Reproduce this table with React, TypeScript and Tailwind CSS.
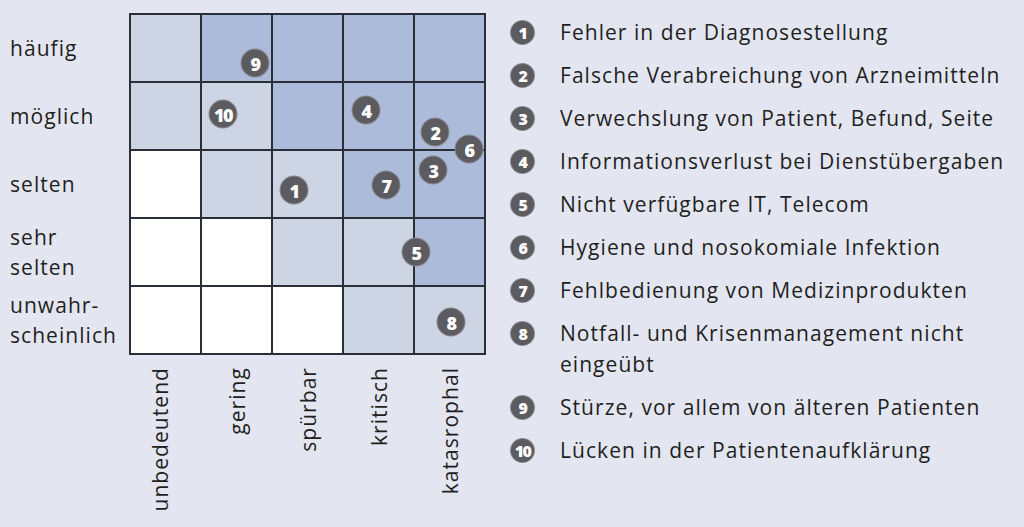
const rowLabels = [["häufig"], ["möglich"], ["selten"], ["sehr", "selten"], ["unwahr-", "scheinlich"]];

const colLabels = ["unbedeutend", "gering", "spürbar", "kritisch", "katasrophal"];

// 0 = white, 1 = light, 2 = dark
const cells = [
  [1, 2, 2, 2, 2],
  [1, 1, 2, 2, 2],
  [0, 1, 1, 2, 2],
  [0, 0, 1, 1, 2],
  [0, 0, 0, 1, 1],
];

const cellColor = ["bg-white", "bg-[#cdd5e5]", "bg-[#acbbd9]"];

const markers = [
  { n: 9, x: 126, y: 50 },
  { n: 10, x: 94, y: 101 },
  { n: 4, x: 237, y: 97 },
  { n: 2, x: 306, y: 119 },
  { n: 6, x: 340, y: 136 },
  { n: 3, x: 304, y: 157 },
  { n: 7, x: 257, y: 172 },
  { n: 1, x: 165, y: 177 },
  { n: 5, x: 287, y: 239 },
  { n: 8, x: 322, y: 309 },
];

const legend = [
  ["Fehler in der Diagnosestellung"],
  ["Falsche Verabreichung von Arzneimitteln"],
  ["Verwechslung von Patient, Befund, Seite"],
  ["Informationsverlust bei Dienstübergaben"],
  ["Nicht verfügbare IT, Telecom"],
  ["Hygiene und nosokomiale Infektion"],
  ["Fehlbedienung von Medizinprodukten"],
  ["Notfall- und Krisenmanagement nicht", "eingeübt"],
  ["Stürze, vor allem von älteren Patienten"],
  ["Lücken in der Patientenaufklärung"],
];

const Badge = ({ n, size }: { n: number; size: "sm" | "lg" }) => (
  <div
    className={
      size === "lg"
        ? "w-[27px] h-[27px] rounded-full bg-[#5b5b60] ring-1 ring-[#8a8a90] flex items-center justify-center text-white font-extrabold text-[18px] leading-none tracking-[-0.08em]"
        : "w-[23px] h-[23px] rounded-full bg-[#5b5b60] ring-1 ring-[#8a8a90] flex items-center justify-center text-white font-extrabold text-[16px] leading-none tracking-[-0.1em]"
    }
  >
    {n}
  </div>
);

export default function App() {
  return (
    <div className="w-[1024px] h-[527px] bg-[#e3e6f0] flex text-[#1f1f22] font-['Open_Sans',sans-serif] font-medium overflow-hidden">
      <div className="w-[500px] pt-[13px] flex flex-col">
        <div className="flex">
          <div className="w-[129px] grid grid-rows-[repeat(5,66px)] gap-[2px] pt-[2px]">
            {rowLabels.map((lines, i) => (
              <div key={i} className="flex flex-col justify-center pl-[10px] text-[21px] leading-[30px] tracking-[0.05em]">
                {lines.map((l) => (
                  <span key={l}>{l}</span>
                ))}
              </div>
            ))}
          </div>
          <div className="relative">
            <div className="grid grid-cols-[repeat(5,69px)] grid-rows-[repeat(5,66px)] gap-[2px] p-[2px] bg-[#2a2e36]">
              {cells.flat().map((c, i) => (
                <div key={i} className={cellColor[c]} />
              ))}
            </div>
            {markers.map((m) => (
              <div
                key={m.n}
                className="absolute -translate-x-1/2 -translate-y-1/2"
                style={{ left: m.x, top: m.y }}
              >
                <Badge n={m.n} size="lg" />
              </div>
            ))}
          </div>
        </div>
        <div className="ml-[129px] mt-[12px] grid grid-cols-[repeat(5,69px)] gap-[2px] px-[2px]">
          {colLabels.map((l, i) => (
            <div key={l} className={i === 0 ? "flex justify-center items-start pr-[12px]" : "flex justify-center items-start"}>
              <span className="[writing-mode:vertical-rl] rotate-180 text-[21px] leading-[24px] tracking-[0.05em]">
                {l}
              </span>
            </div>
          ))}
        </div>
      </div>
      <div className="flex-1 pt-[17px] flex flex-col gap-[12px]">
        {legend.map((lines, i) => (
          <div key={i} className="flex items-start">
            <div className="w-[60px] h-[31px] pl-[11px] flex items-center shrink-0">
              <Badge n={i + 1} size="sm" />
            </div>
            <div className="flex flex-col whitespace-nowrap text-[21px] leading-[31px] tracking-[0.05em]">
              {lines.map((l) => (
                <span key={l}>{l}</span>
              ))}
            </div>
          </div>
        ))}
      </div>
    </div>
  );
}
